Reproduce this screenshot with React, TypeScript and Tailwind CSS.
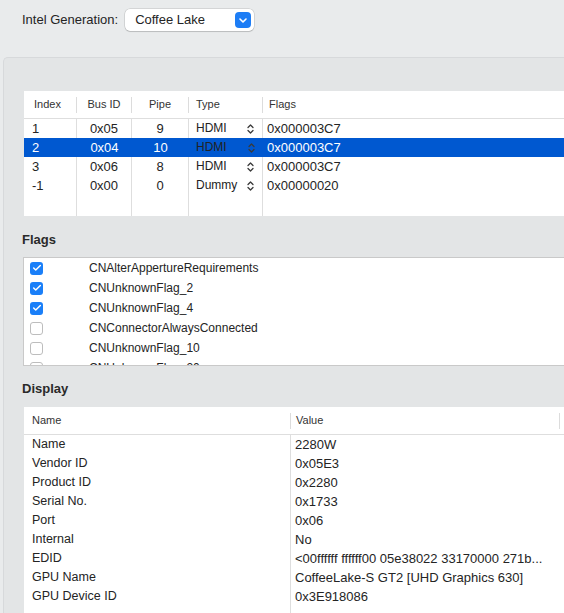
import { Check } from "lucide-react"

interface Connector {
  index: string
  busId: string
  pipe: string
  type: string
  flags: string
}

const connectors: Connector[] = [
  { index: "1", busId: "0x05", pipe: "9", type: "HDMI", flags: "0x000003C7" },
  { index: "2", busId: "0x04", pipe: "10", type: "HDMI", flags: "0x000003C7" },
  { index: "3", busId: "0x06", pipe: "8", type: "HDMI", flags: "0x000003C7" },
  { index: "-1", busId: "0x00", pipe: "0", type: "Dummy", flags: "0x00000020" },
]

const flagItems = [
  { name: "CNAlterAppertureRequirements", on: true },
  { name: "CNUnknownFlag_2", on: true },
  { name: "CNUnknownFlag_4", on: true },
  { name: "CNConnectorAlwaysConnected", on: false },
  { name: "CNUnknownFlag_10", on: false },
  { name: "CNUnknownFlag_20", on: false },
]

const displayInfo = [
  ["Name", "2280W"],
  ["Vendor ID", "0x05E3"],
  ["Product ID", "0x2280"],
  ["Serial No.", "0x1733"],
  ["Port", "0x06"],
  ["Internal", "No"],
  ["EDID", "<00ffffff ffffff00 05e38022 33170000 271b..."],
  ["GPU Name", "CoffeeLake-S GT2 [UHD Graphics 630]"],
  ["GPU Device ID", "0x3E918086"],
]

const cols = "grid grid-cols-[53px_55px_57px_74px_1fr]"
const selectedRow = 1

function Stepper() {
  return (
    <svg width="7" height="10" viewBox="0 0 7 10" fill="none" stroke="#3a3a3a" strokeWidth="1.3" strokeLinecap="round" strokeLinejoin="round">
      <path d="M1 3.5 L3.5 1 L6 3.5" />
      <path d="M1 6.5 L3.5 9 L6 6.5" />
    </svg>
  )
}

function HeaderCell({ label, align = "left", pad = "pl-[10px]" }: { label: string; align?: "left" | "center"; pad?: string }) {
  return (
    <div className="flex items-center h-full">
      <span className={`flex-1 ${pad} ${align === "center" ? "text-center" : ""}`}>{label}</span>
      <div className="w-px h-[16px] bg-[#dcdcdc]" />
    </div>
  )
}

export default function App() {
  return (
    <div className="w-[564px] h-[613px] overflow-hidden bg-[#e9ebec] text-[#242424] font-['Liberation_Sans',Arial,sans-serif]">
      {/* generation picker */}
      <div className="h-[57px] flex items-start pt-[9px] pl-[22px] gap-[7px]">
        <span className="text-[13px] leading-[22px]">Intel Generation:</span>
        <div className="w-[129px] h-[22px] bg-white rounded-[5px] shadow-[0_0_0_0.5px_rgba(0,0,0,0.18),0_1px_1px_rgba(0,0,0,0.12)] flex items-center pl-[10px] pr-[3px]">
          <span className="flex-1 text-[13px]">Coffee Lake</span>
          <div className="w-[16px] h-[16px] rounded-[4px] bg-[#1d7df5] flex items-center justify-center">
            <svg width="8" height="5" viewBox="0 0 8 5" fill="none" stroke="white" strokeWidth="1.6" strokeLinecap="round" strokeLinejoin="round">
              <path d="M1 1 L4 4 L7 1" />
            </svg>
          </div>
        </div>
      </div>

      <div className="ml-[3px] h-[556px] border-t border-l border-[#d7d9db] rounded-tl-[5px] bg-[#e3e5e6] pt-[33px] pl-[20px]">
        {/* connectors table */}
        <div className="h-[125px] bg-white flex flex-col">
          <div className={`${cols} h-[28px] border-b border-[#dedede] text-[11px] text-[#333]`}>
            <HeaderCell label="Index" />
            <HeaderCell label="Bus ID" align="center" pad="pl-0" />
            <HeaderCell label="Pipe" align="center" pad="pl-0" />
            <HeaderCell label="Type" pad="pl-[7px]" />
            <div className="flex items-center pl-[6px]">Flags</div>
          </div>
          {connectors.map((c, i) => {
            const sel = i === selectedRow
            const cell = sel ? "bg-[#0058d0] text-white" : "border-r border-[#dedede]"
            return (
              <div key={c.index} className={`${cols} h-[19px] text-[13px] leading-[19px]`}>
                <div className={`${cell} pl-[8px]`}>{c.index}</div>
                <div className={`${cell} text-center`}>{c.busId}</div>
                <div className={`${cell} text-center`}>{c.pipe}</div>
                <div className={`${sel ? "bg-[#0058d0]" : "border-r border-[#dedede]"} flex items-center pl-[7px] pr-[8px] text-[12px] text-[#222]`}>
                  <span className="flex-1">{c.type}</span>
                  <Stepper />
                </div>
                <div className={`${sel ? "bg-[#0058d0] text-white" : ""} pl-[4px]`}>{c.flags}</div>
              </div>
            )
          })}
          <div className={`${cols} flex-1`}>
            <div className="border-r border-[#dedede]" />
            <div className="border-r border-[#dedede]" />
            <div className="border-r border-[#dedede]" />
            <div className="border-r border-[#dedede]" />
            <div />
          </div>
        </div>

        <div className="pt-[16px] pb-[9px] text-[13px] leading-[16px] font-bold text-[#2a2a2a] -ml-[2px]">Flags</div>

        {/* flag list */}
        <div className="-ml-px h-[109px] overflow-hidden bg-white border border-[#c9c9c9] border-r-0">
          {flagItems.map((f) => (
            <div key={f.name} className="h-[20px] flex items-center pl-[6px] text-[12px]">
              {f.on ? (
                <div className="w-[13px] h-[13px] rounded-[3px] bg-[#1a7ff8] flex items-center justify-center">
                  <Check className="w-[10px] h-[10px] text-white" strokeWidth={3.5} />
                </div>
              ) : (
                <div className="w-[13px] h-[13px] rounded-[3px] bg-white border border-[#bdbdbd]" />
              )}
              <span className="ml-[46px]">{f.name}</span>
            </div>
          ))}
        </div>

        <div className="pt-[15px] pb-[10px] text-[13px] leading-[16px] font-bold text-[#2a2a2a] -ml-[2px]">Display</div>

        {/* display table */}
        <div className="h-[220px] bg-white flex flex-col">
          <div className="grid grid-cols-[267px_1fr] h-[28px] border-b border-[#dedede] text-[11px] text-[#333]">
            <div className="flex items-center">
              <span className="flex-1 pl-[8px]">Name</span>
              <div className="w-px h-[16px] bg-[#dcdcdc]" />
            </div>
            <div className="flex items-center">
              <span className="flex-1 pl-[5px]">Value</span>
              <div className="w-px h-[16px] bg-[#dcdcdc] mr-[4px]" />
            </div>
          </div>
          <div className="grid grid-cols-[267px_1fr] flex-1">
            <div className="border-r border-[#dedede] pl-[8px] text-[12.5px]">
              {displayInfo.map(([k]) => (
                <div key={k} className="h-[19px] leading-[19px]">{k}</div>
              ))}
            </div>
            <div className="pl-[4px] text-[13px]">
              {displayInfo.map(([k, v]) => (
                <div key={k} className="h-[19px] leading-[19px] whitespace-nowrap">{v}</div>
              ))}
            </div>
          </div>
        </div>
      </div>
    </div>
  )
}
